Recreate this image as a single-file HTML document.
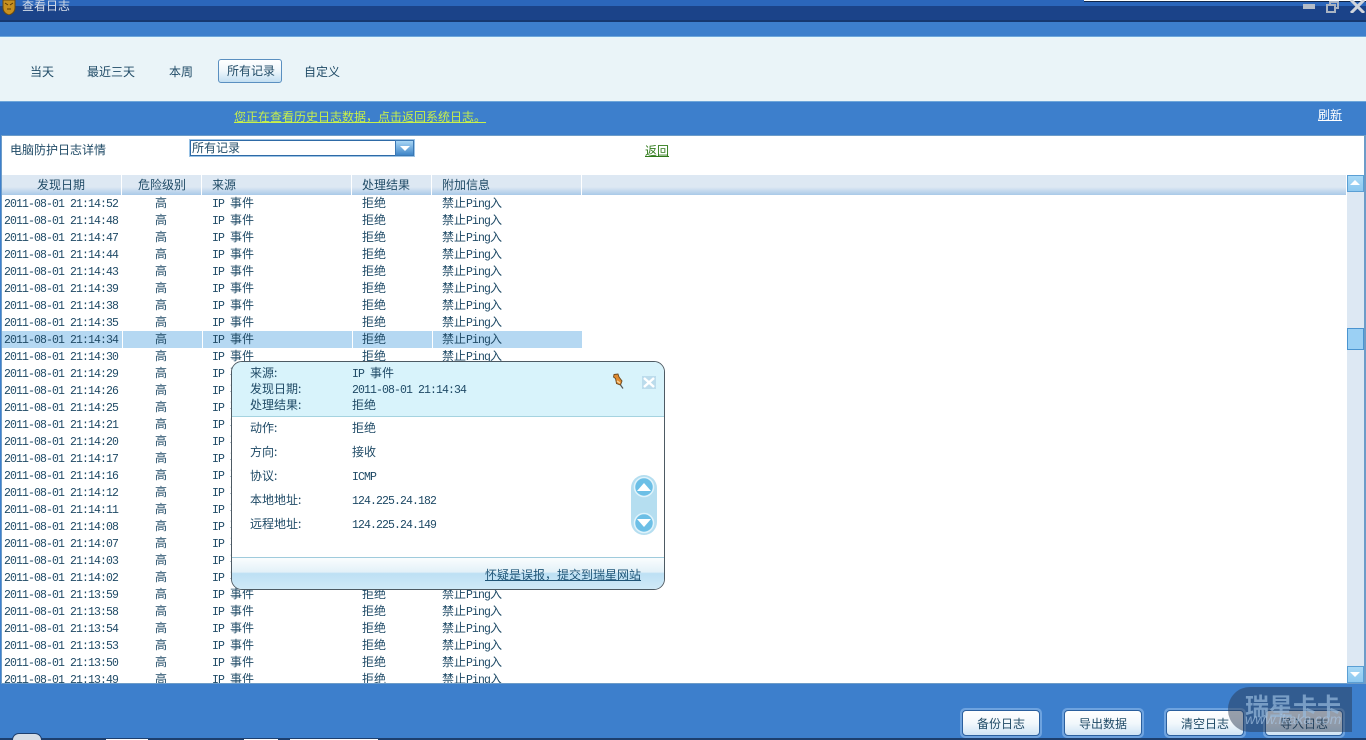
<!DOCTYPE html>
<html style="overflow:hidden;height:740px"><head><meta charset="utf-8"><style>
*{box-sizing:border-box}
html,body{margin:0;padding:0}
body{width:1366px;height:740px;position:relative;overflow:hidden;background:#3d7fcc;font:12px/17px "WenQuanYi Zen Hei","Noto Sans CJK SC",sans-serif;color:#1f4a66}
.a{position:absolute;white-space:nowrap}
.tab{top:63px;height:17px;color:#1f4a66}
.th{position:absolute;top:175px;height:20px;background:linear-gradient(#dde8f3 0,#dde8f3 60%,#a9c9e8 100%);line-height:20px}
#rows{position:absolute;left:2px;top:195px;width:1345px;height:488px;overflow:hidden;background:#fff}
.r{position:relative;height:17px;width:580px}
.r span{position:absolute;top:-1px;white-space:nowrap}
.r .d{left:2px;top:1px;font-family:"Liberation Mono",monospace;font-size:11.5px;letter-spacing:-.9px}
.r .l{left:153px}.r .s{left:210px}.r .x{left:360px}.r .i{left:440px}
.s i,.p i,.i i{font-style:normal;font-family:"Liberation Mono",monospace;font-size:11.5px;letter-spacing:-.9px;white-space:pre}
.sel{background:linear-gradient(90deg,#b5d8f2 0,#b5d8f2 120px,#fff 120px,#fff 121px,#b5d8f2 121px,#b5d8f2 200px,#fff 200px,#fff 201px,#b5d8f2 201px,#b5d8f2 350px,#fff 350px,#fff 351px,#b5d8f2 351px,#b5d8f2 430px,#fff 430px,#fff 431px,#b5d8f2 431px)}
.b{position:absolute;top:708px;width:82px;height:30px;background:#6ea3df;border-radius:5px;padding:2px}
.b div{height:26px;border:1px solid #2a5f9e;border-radius:4px;background:linear-gradient(#fff 0,#f2f8fc 50%,#cfe4f5 100%);text-align:center;line-height:25px;color:#1f4a66}
.p{position:absolute;left:231px;top:361px;width:434px;height:229px;background:#fff;border:1px solid #4d5a63;border-radius:11px;overflow:hidden}
.p .a{line-height:16px}
</style></head><body>

<!-- title bar -->
<div class="a" style="left:0;top:0;width:1366px;height:6px;background:#2b66bb"></div>
<div class="a" style="left:0;top:6px;width:1366px;height:14px;background:#1b4389"></div>
<div class="a" style="left:0;top:20px;width:1366px;height:2px;background:#16386f"></div>
<div class="a" style="left:1084px;top:0;width:282px;height:2px;background:#fff;border-bottom:1px solid #10264a"></div>
<svg class="a" style="left:1px;top:0" width="16" height="15" viewBox="0 0 16 15"><path d="M2 0H14V8C14 12 11 14 8 15C5 14 2 12 2 8Z" fill="#c89020" stroke="#6b4a10"/><path d="M4 3L7 5M12 3L9 5M6 9H10" stroke="#5a3a08" fill="none"/></svg>
<div class="a" style="left:22px;top:-3px;color:#d5dde8;line-height:17px">查看日志</div>
<div class="a" style="left:1303px;top:4px;width:12px;height:5px;background:#b4bcc8"></div>
<svg class="a" style="left:1326px;top:1px" width="14" height="12" viewBox="0 0 14 12"><path d="M1 4H9V11H1ZM4 4V1H12V7H9" fill="none" stroke="#aab4c2" stroke-width="2"/></svg>
<svg class="a" style="left:1350px;top:0" width="15" height="13" viewBox="0 0 15 13"><path d="M1 0L14 13M14 0L1 13" stroke="#d0d5dc" stroke-width="3"/></svg>

<!-- tab strip -->
<div class="a" style="left:0;top:36px;width:1366px;height:66px;background:#eaf4f8;border-top:1px solid #6ea6da;border-bottom:1px solid #6ea6da"></div>
<div class="a" style="left:0;top:37px;width:1366px;height:1px;background:#e6f8fd"></div>
<div class="a tab" style="left:30px">当天</div>
<div class="a tab" style="left:87px">最近三天</div>
<div class="a tab" style="left:169px">本周</div>
<div class="a" style="left:218px;top:59px;width:64px;height:24px;border:1px solid #5a8fc0;border-radius:3px;background:linear-gradient(#fff,#eef6fb 50%,#c3dff2);text-align:center;line-height:22px;padding-left:2px">所有记录</div>
<div class="a tab" style="left:304px">自定义</div>

<!-- info bar -->
<div class="a" style="left:234px;top:108px;color:#c8f04a;text-decoration:underline">您正在查看历史日志数据，点击返回系统日志。</div>
<div class="a" style="left:1318px;top:106px;color:#fff;text-decoration:underline">刷新</div>

<!-- main panel -->
<div class="a" style="left:1px;top:135px;width:1365px;height:549px;background:#fff;border:1px solid #6d9cc8;border-right-width:2px"></div>
<div class="a" style="left:10px;top:141px">电脑防护日志详情</div>
<div class="a" style="left:189px;top:139px;width:226px;height:18px;background:#fff;border:1px solid #9cc4e6"></div>
<div class="a" style="left:190px;top:140px;width:206px;height:16px;border:1px solid #2e6aa6;border-right:0;line-height:14px;padding-left:1px">所有记录</div>
<div class="a" style="left:395px;top:140px;width:19px;height:16px;background:linear-gradient(#a9d6f5,#3f86c8);border:1px solid #3b78b4"></div>
<div class="a" style="left:400px;top:146px;border:5px solid transparent;border-top:5px solid #fff;border-bottom:0"></div>
<div class="a" style="left:645px;top:142px;color:#2f7a1a;text-decoration:underline">返回</div>

<!-- header -->
<div class="th" style="left:2px;width:119px;padding-left:35px">发现日期</div>
<div class="th" style="left:122px;width:79px;padding-left:16px">危险级别</div>
<div class="th" style="left:202px;width:149px;padding-left:10px">来源</div>
<div class="th" style="left:352px;width:79px;padding-left:10px">处理结果</div>
<div class="th" style="left:432px;width:149px;padding-left:10px">附加信息</div>
<div class="th" style="left:582px;width:764px"></div>

<!-- rows -->
<div id="rows">
<div class="r"><span class="d">2011-08-01 21:14:52</span><span class="l">高</span><span class="s"><i>IP </i>事件</span><span class="x">拒绝</span><span class="i">禁止<i>Ping</i>入</span></div>
<div class="r"><span class="d">2011-08-01 21:14:48</span><span class="l">高</span><span class="s"><i>IP </i>事件</span><span class="x">拒绝</span><span class="i">禁止<i>Ping</i>入</span></div>
<div class="r"><span class="d">2011-08-01 21:14:47</span><span class="l">高</span><span class="s"><i>IP </i>事件</span><span class="x">拒绝</span><span class="i">禁止<i>Ping</i>入</span></div>
<div class="r"><span class="d">2011-08-01 21:14:44</span><span class="l">高</span><span class="s"><i>IP </i>事件</span><span class="x">拒绝</span><span class="i">禁止<i>Ping</i>入</span></div>
<div class="r"><span class="d">2011-08-01 21:14:43</span><span class="l">高</span><span class="s"><i>IP </i>事件</span><span class="x">拒绝</span><span class="i">禁止<i>Ping</i>入</span></div>
<div class="r"><span class="d">2011-08-01 21:14:39</span><span class="l">高</span><span class="s"><i>IP </i>事件</span><span class="x">拒绝</span><span class="i">禁止<i>Ping</i>入</span></div>
<div class="r"><span class="d">2011-08-01 21:14:38</span><span class="l">高</span><span class="s"><i>IP </i>事件</span><span class="x">拒绝</span><span class="i">禁止<i>Ping</i>入</span></div>
<div class="r"><span class="d">2011-08-01 21:14:35</span><span class="l">高</span><span class="s"><i>IP </i>事件</span><span class="x">拒绝</span><span class="i">禁止<i>Ping</i>入</span></div>
<div class="r sel"><span class="d">2011-08-01 21:14:34</span><span class="l">高</span><span class="s"><i>IP </i>事件</span><span class="x">拒绝</span><span class="i">禁止<i>Ping</i>入</span></div>
<div class="r"><span class="d">2011-08-01 21:14:30</span><span class="l">高</span><span class="s"><i>IP </i>事件</span><span class="x">拒绝</span><span class="i">禁止<i>Ping</i>入</span></div>
<div class="r"><span class="d">2011-08-01 21:14:29</span><span class="l">高</span><span class="s"><i>IP </i>事件</span><span class="x">拒绝</span><span class="i">禁止<i>Ping</i>入</span></div>
<div class="r"><span class="d">2011-08-01 21:14:26</span><span class="l">高</span><span class="s"><i>IP </i>事件</span><span class="x">拒绝</span><span class="i">禁止<i>Ping</i>入</span></div>
<div class="r"><span class="d">2011-08-01 21:14:25</span><span class="l">高</span><span class="s"><i>IP </i>事件</span><span class="x">拒绝</span><span class="i">禁止<i>Ping</i>入</span></div>
<div class="r"><span class="d">2011-08-01 21:14:21</span><span class="l">高</span><span class="s"><i>IP </i>事件</span><span class="x">拒绝</span><span class="i">禁止<i>Ping</i>入</span></div>
<div class="r"><span class="d">2011-08-01 21:14:20</span><span class="l">高</span><span class="s"><i>IP </i>事件</span><span class="x">拒绝</span><span class="i">禁止<i>Ping</i>入</span></div>
<div class="r"><span class="d">2011-08-01 21:14:17</span><span class="l">高</span><span class="s"><i>IP </i>事件</span><span class="x">拒绝</span><span class="i">禁止<i>Ping</i>入</span></div>
<div class="r"><span class="d">2011-08-01 21:14:16</span><span class="l">高</span><span class="s"><i>IP </i>事件</span><span class="x">拒绝</span><span class="i">禁止<i>Ping</i>入</span></div>
<div class="r"><span class="d">2011-08-01 21:14:12</span><span class="l">高</span><span class="s"><i>IP </i>事件</span><span class="x">拒绝</span><span class="i">禁止<i>Ping</i>入</span></div>
<div class="r"><span class="d">2011-08-01 21:14:11</span><span class="l">高</span><span class="s"><i>IP </i>事件</span><span class="x">拒绝</span><span class="i">禁止<i>Ping</i>入</span></div>
<div class="r"><span class="d">2011-08-01 21:14:08</span><span class="l">高</span><span class="s"><i>IP </i>事件</span><span class="x">拒绝</span><span class="i">禁止<i>Ping</i>入</span></div>
<div class="r"><span class="d">2011-08-01 21:14:07</span><span class="l">高</span><span class="s"><i>IP </i>事件</span><span class="x">拒绝</span><span class="i">禁止<i>Ping</i>入</span></div>
<div class="r"><span class="d">2011-08-01 21:14:03</span><span class="l">高</span><span class="s"><i>IP </i>事件</span><span class="x">拒绝</span><span class="i">禁止<i>Ping</i>入</span></div>
<div class="r"><span class="d">2011-08-01 21:14:02</span><span class="l">高</span><span class="s"><i>IP </i>事件</span><span class="x">拒绝</span><span class="i">禁止<i>Ping</i>入</span></div>
<div class="r"><span class="d">2011-08-01 21:13:59</span><span class="l">高</span><span class="s"><i>IP </i>事件</span><span class="x">拒绝</span><span class="i">禁止<i>Ping</i>入</span></div>
<div class="r"><span class="d">2011-08-01 21:13:58</span><span class="l">高</span><span class="s"><i>IP </i>事件</span><span class="x">拒绝</span><span class="i">禁止<i>Ping</i>入</span></div>
<div class="r"><span class="d">2011-08-01 21:13:54</span><span class="l">高</span><span class="s"><i>IP </i>事件</span><span class="x">拒绝</span><span class="i">禁止<i>Ping</i>入</span></div>
<div class="r"><span class="d">2011-08-01 21:13:53</span><span class="l">高</span><span class="s"><i>IP </i>事件</span><span class="x">拒绝</span><span class="i">禁止<i>Ping</i>入</span></div>
<div class="r"><span class="d">2011-08-01 21:13:50</span><span class="l">高</span><span class="s"><i>IP </i>事件</span><span class="x">拒绝</span><span class="i">禁止<i>Ping</i>入</span></div>
<div class="r"><span class="d">2011-08-01 21:13:49</span><span class="l">高</span><span class="s"><i>IP </i>事件</span><span class="x">拒绝</span><span class="i">禁止<i>Ping</i>入</span></div>
</div>

<!-- scrollbar -->
<div class="a" style="left:1347px;top:175px;width:17px;height:508px;background:#dde8f3"></div>
<div class="a" style="left:1347px;top:175px;width:17px;height:17px;background:linear-gradient(#a9d9f6,#8cc8f0);border:1px solid #5a9fd4"></div>
<div class="a" style="left:1350px;top:180px;border:5px solid transparent;border-bottom:5px solid #fff;border-top:0"></div>
<div class="a" style="left:1347px;top:328px;width:17px;height:22px;background:#9bd0f4;border:1px solid #4a94d0"></div>
<div class="a" style="left:1347px;top:666px;width:17px;height:17px;background:linear-gradient(#a9d9f6,#8cc8f0);border:1px solid #5a9fd4"></div>
<div class="a" style="left:1350px;top:672px;border:5px solid transparent;border-top:5px solid #fff;border-bottom:0"></div>

<!-- popup -->
<div class="p">
  <div class="a" style="left:0;top:0;width:432px;height:55px;background:#d8f3fb;border-bottom:1px solid #a5d3e0"></div>
  <div class="a" style="left:18px;top:3px">来源:</div>
  <div class="a" style="left:120px;top:3px"><i>IP </i>事件</div>
  <div class="a" style="left:18px;top:19px">发现日期:</div>
  <div class="a" style="left:120px;top:19px"><i>2011-08-01 21:14:34</i></div>
  <div class="a" style="left:18px;top:35px">处理结果:</div>
  <div class="a" style="left:120px;top:35px">拒绝</div>
  <svg class="a" style="left:379px;top:11px" width="14" height="17" viewBox="0 0 14 17"><path d="M3 1.5L7 1L8 4L11 8L9.5 12L5.5 10.5L4.5 5.5L2.5 4Z" fill="#e08a30" stroke="#6b4a20" stroke-width=".9"/><path d="M6 8L9 10" stroke="#f7d39a" stroke-width="1.4"/><path d="M9.5 12L12 15.5" stroke="#555" stroke-width="1.2"/></svg>
  <div class="a" style="left:410px;top:14px;width:14px;height:13px;background:#bcdcec"></div>
  <svg class="a" style="left:410px;top:14px" width="14" height="13" viewBox="0 0 14 13"><path d="M2 2L12 11M12 2L2 11" stroke="#fff" stroke-width="2.4"/></svg>

  <div class="a" style="left:18px;top:58px">动作:</div><div class="a" style="left:120px;top:58px">拒绝</div>
  <div class="a" style="left:18px;top:82px">方向:</div><div class="a" style="left:120px;top:82px">接收</div>
  <div class="a" style="left:18px;top:106px">协议:</div><div class="a" style="left:120px;top:106px"><i>ICMP</i></div>
  <div class="a" style="left:18px;top:130px">本地地址:</div><div class="a" style="left:120px;top:130px"><i>124.225.24.182</i></div>
  <div class="a" style="left:18px;top:154px">远程地址:</div><div class="a" style="left:120px;top:154px"><i>124.225.24.149</i></div>

  <svg class="a" style="left:399px;top:113px" width="26" height="60" viewBox="0 0 26 60"><rect x="0" y="0" width="26" height="60" rx="13" fill="#b5def0"/><circle cx="13" cy="12" r="9.5" fill="#6cbfe6" stroke="#dff3fb" stroke-width="1.5"/><circle cx="13" cy="48" r="9.5" fill="#6cbfe6" stroke="#dff3fb" stroke-width="1.5"/><path d="M6 16L13 8L20 16Z M6 44L13 52L20 44Z" fill="#fff"/></svg>

  <div class="a" style="left:0;top:195px;width:432px;height:32px;background:linear-gradient(#fafdfe,#e3f1f8 45%,#bde0f4 50%,#cfe9f7);border-top:1px solid #9fcbdc"></div>
  <div class="a" style="left:253px;top:205px;color:#1f5577;text-decoration:underline">怀疑是误报，提交到瑞星网站</div>
</div>

<!-- bottom buttons -->
<div class="b" style="left:960px"><div>备份日志</div></div>
<div class="b" style="left:1062px"><div>导出数据</div></div>
<div class="b" style="left:1164px"><div>清空日志</div></div>
<div class="b" style="left:1263px"><div>导入日志</div></div>

<!-- watermark -->
<div class="a" style="left:1228px;top:687px;width:124px;height:45px;background:rgba(40,55,80,.48);border-radius:22px 0 0 22px"></div>
<div class="a" style="left:1245px;top:692px;font-size:24px;line-height:26px;font-weight:bold;color:rgba(150,185,220,.7)">瑞星卡卡</div>
<div class="a" style="left:1245px;top:711px;font:italic 14px/16px 'Liberation Sans',sans-serif;color:rgba(170,200,230,.65)">www.ikaka.com</div>

<!-- bottom strip -->
<div class="a" style="left:0;top:738px;width:1366px;height:2px;background:#1d3f6e"></div>
<div class="a" style="left:106px;top:739px;width:42px;height:1px;background:#fff"></div>
<div class="a" style="left:244px;top:739px;width:34px;height:1px;background:#fff"></div>
<div class="a" style="left:290px;top:739px;width:88px;height:1px;background:#fff"></div>
<div class="a" style="left:12px;top:733px;width:30px;height:7px;border-radius:15px 15px 0 0;background:#d5dde6;border:1px solid #1d3f6e;border-bottom:0"></div>
</body></html>
